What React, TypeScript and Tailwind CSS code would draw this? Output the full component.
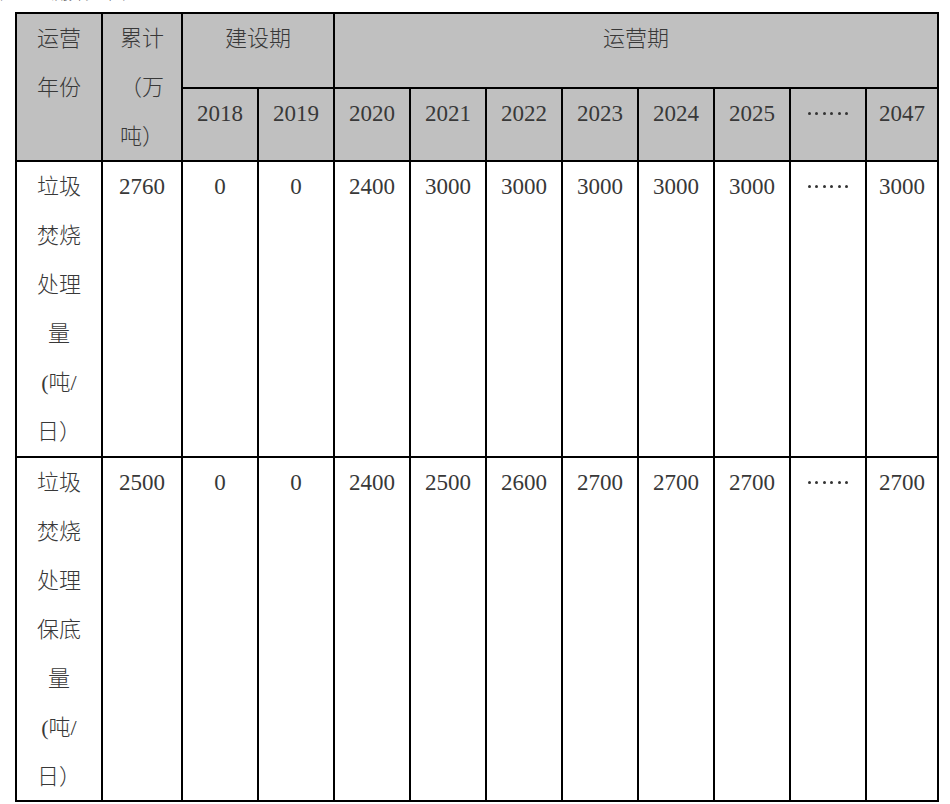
import React from "react";

function Lines({ lines }: { lines: string[] }) {
  return (
    <>
      {lines.map((l, i) => (
        <div key={i} className="whitespace-nowrap">
          {l}
        </div>
      ))}
    </>
  );
}

function Dots() {
  return (
    <div className="flex h-[49px] items-center justify-center gap-[4.5px]">
      {[0, 1, 2, 3, 4, 5].map((i) => (
        <span key={i} className="block h-[3px] w-[3px] rounded-full bg-[#333]" />
      ))}
    </div>
  );
}

function Num({ v }: { v: string }) {
  return <span className="font-['Liberation_Serif','Times_New_Roman',serif] text-[23px] font-normal">{v}</span>;
}

const years = ["2020", "2021", "2022", "2023", "2024", "2025"];
const row1 = ["2400", "3000", "3000", "3000", "3000", "3000"];
const row2 = ["2400", "2500", "2600", "2700", "2700", "2700"];

export default function App() {
  const head = "bg-[#c0c0c0] text-center";
  const body = "bg-white text-center";
  return (
    <div className="min-h-[804px] w-[950px] bg-white font-['Liberation_Serif','Noto_Sans_CJK_SC',serif] text-[22px] font-light leading-[49px] text-[#383838]">
      <div className="h-[12px] overflow-hidden">
        <div className="mt-[-15px] whitespace-nowrap text-[17px] leading-[17px] text-[#444]">
          处理量测算见下表：
        </div>
      </div>
      <div className="ml-[15px] inline-grid grid-cols-[84px_78px_repeat(9,74px)_70px] grid-rows-[73px_71px_294px_342px] gap-[2px] border-2 border-black bg-black">
        <div className={`${head} row-span-2`}>
          <Lines lines={["运营", "年份"]} />
        </div>
        <div className={`${head} row-span-2`}>
          <Lines lines={["累计", "（万", "吨）"]} />
        </div>
        <div className={`${head} col-span-2`}>建设期</div>
        <div className={`${head} col-span-8`}>运营期</div>
        <div className={head}><Num v="2018" /></div>
        <div className={head}><Num v="2019" /></div>
        {years.map((y) => (
          <div key={y} className={head}>
            <Num v={y} />
          </div>
        ))}
        <div className={head}>
          <Dots />
        </div>
        <div className={head}><Num v="2047" /></div>

        <div className={body}>
          <Lines lines={["垃圾", "焚烧", "处理", "量", "(吨/", "日）"]} />
        </div>
        <div className={body}><Num v="2760" /></div>
        <div className={body}><Num v="0" /></div>
        <div className={body}><Num v="0" /></div>
        {row1.map((v, i) => (
          <div key={i} className={body}>
            <Num v={v} />
          </div>
        ))}
        <div className={body}>
          <Dots />
        </div>
        <div className={body}><Num v="3000" /></div>

        <div className={body}>
          <Lines lines={["垃圾", "焚烧", "处理", "保底", "量", "(吨/", "日）"]} />
        </div>
        <div className={body}><Num v="2500" /></div>
        <div className={body}><Num v="0" /></div>
        <div className={body}><Num v="0" /></div>
        {row2.map((v, i) => (
          <div key={i} className={body}>
            <Num v={v} />
          </div>
        ))}
        <div className={body}>
          <Dots />
        </div>
        <div className={body}><Num v="2700" /></div>
      </div>
    </div>
  );
}
